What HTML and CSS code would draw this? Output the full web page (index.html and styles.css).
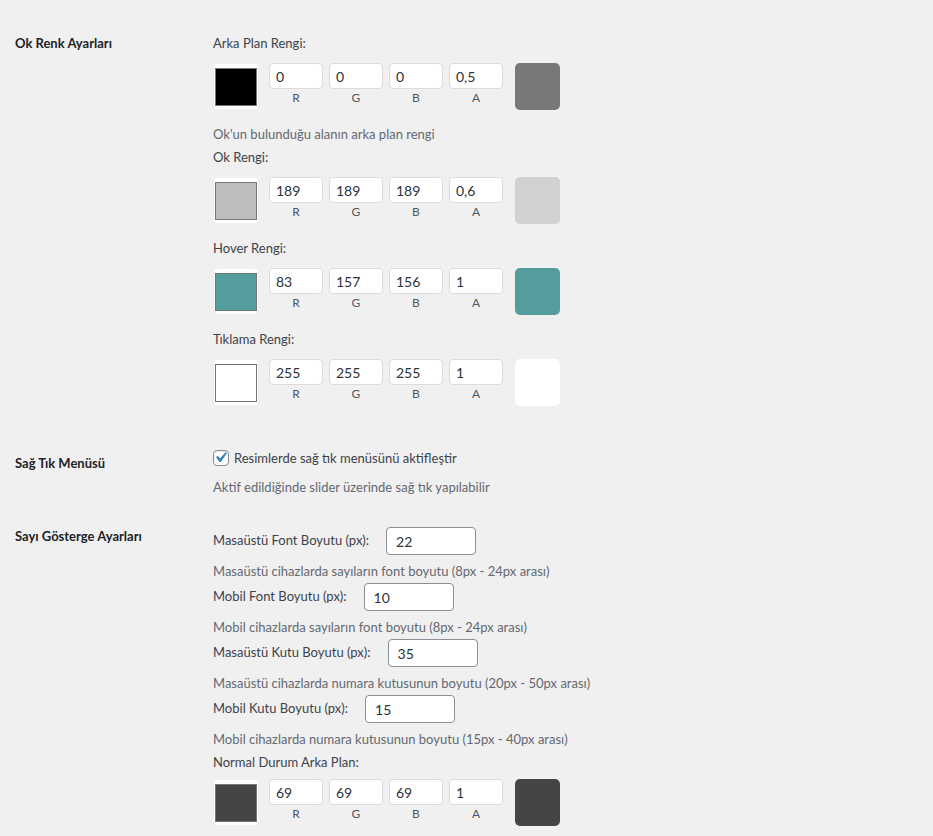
FILE: index.html
```html
<!DOCTYPE html>
<html lang="tr">
<head>
<meta charset="utf-8">
<title>Slider Ayarları</title>
<link rel="stylesheet" href="styles.css">
</head>
<body>
<main class="settings">

  <section class="field field--arrows">
    <div class="field-title">Ok Renk Ayarları</div>
    <div class="field-body">
      <div class="color-group color-group--described">
        <div class="group-label">Arka Plan Rengi:</div>
        <div class="rgba-row">
          <span class="swatch"><span class="swatch-fill" style="background:#000000"></span></span>
          <label class="channel"><input class="channel-input" type="text" value="0"><span class="channel-name">R</span></label>
          <label class="channel"><input class="channel-input" type="text" value="0"><span class="channel-name">G</span></label>
          <label class="channel"><input class="channel-input" type="text" value="0"><span class="channel-name">B</span></label>
          <label class="channel"><input class="channel-input" type="text" value="0,5"><span class="channel-name">A</span></label>
          <span class="preview" style="background:rgba(0,0,0,0.5)"></span>
        </div>
        <p class="description description--after-row">Ok'un bulunduğu alanın arka plan rengi</p>
      </div>

      <div class="color-group">
        <div class="group-label">Ok Rengi:</div>
        <div class="rgba-row">
          <span class="swatch"><span class="swatch-fill" style="background:#bdbdbd"></span></span>
          <label class="channel"><input class="channel-input" type="text" value="189"><span class="channel-name">R</span></label>
          <label class="channel"><input class="channel-input" type="text" value="189"><span class="channel-name">G</span></label>
          <label class="channel"><input class="channel-input" type="text" value="189"><span class="channel-name">B</span></label>
          <label class="channel"><input class="channel-input" type="text" value="0,6"><span class="channel-name">A</span></label>
          <span class="preview" style="background:rgba(189,189,189,0.6)"></span>
        </div>
      </div>

      <div class="color-group">
        <div class="group-label">Hover Rengi:</div>
        <div class="rgba-row">
          <span class="swatch"><span class="swatch-fill" style="background:#539d9c"></span></span>
          <label class="channel"><input class="channel-input" type="text" value="83"><span class="channel-name">R</span></label>
          <label class="channel"><input class="channel-input" type="text" value="157"><span class="channel-name">G</span></label>
          <label class="channel"><input class="channel-input" type="text" value="156"><span class="channel-name">B</span></label>
          <label class="channel"><input class="channel-input" type="text" value="1"><span class="channel-name">A</span></label>
          <span class="preview" style="background:rgba(83,157,156,1)"></span>
        </div>
      </div>

      <div class="color-group">
        <div class="group-label">Tıklama Rengi:</div>
        <div class="rgba-row">
          <span class="swatch"><span class="swatch-fill" style="background:#ffffff"></span></span>
          <label class="channel"><input class="channel-input" type="text" value="255"><span class="channel-name">R</span></label>
          <label class="channel"><input class="channel-input" type="text" value="255"><span class="channel-name">G</span></label>
          <label class="channel"><input class="channel-input" type="text" value="255"><span class="channel-name">B</span></label>
          <label class="channel"><input class="channel-input" type="text" value="1"><span class="channel-name">A</span></label>
          <span class="preview" style="background:rgba(255,255,255,1)"></span>
        </div>
      </div>
    </div>
  </section>

  <section class="field field--context">
    <div class="field-title">Sağ Tık Menüsü</div>
    <div class="field-body">
      <label class="check">
        <span class="check-box">
          <svg class="check-mark" viewBox="0 0 20 20" width="21" height="21" aria-hidden="true"><path d="M14.83 4.89l1.34.94-5.81 8.38H9.02L5.78 9.67l1.34-1.25 2.57 2.4z"/></svg>
        </span>
        <span>Resimlerde sağ tık menüsünü aktifleştir</span>
      </label>
      <p class="description description--check">Aktif edildiğinde slider üzerinde sağ tık yapılabilir</p>
    </div>
  </section>

  <section class="field field--counter">
    <div class="field-title">Sayı Gösterge Ayarları</div>
    <div class="field-body">
      <div class="size-line"><span class="size-label">Masaüstü Font Boyutu (px):</span><input class="size-input" type="text" value="22"></div>
      <p class="description description--size">Masaüstü cihazlarda sayıların font boyutu (8px - 24px arası)</p>

      <div class="size-line"><span class="size-label">Mobil Font Boyutu (px):</span><input class="size-input" type="text" value="10"></div>
      <p class="description description--size">Mobil cihazlarda sayıların font boyutu (8px - 24px arası)</p>

      <div class="size-line"><span class="size-label">Masaüstü Kutu Boyutu (px):</span><input class="size-input" type="text" value="35"></div>
      <p class="description description--size">Masaüstü cihazlarda numara kutusunun boyutu (20px - 50px arası)</p>

      <div class="size-line"><span class="size-label">Mobil Kutu Boyutu (px):</span><input class="size-input" type="text" value="15"></div>
      <p class="description description--size">Mobil cihazlarda numara kutusunun boyutu (15px - 40px arası)</p>

      <div class="color-group color-group--counter">
        <div class="group-label">Normal Durum Arka Plan:</div>
        <div class="rgba-row">
          <span class="swatch"><span class="swatch-fill" style="background:#454545"></span></span>
          <label class="channel"><input class="channel-input" type="text" value="69"><span class="channel-name">R</span></label>
          <label class="channel"><input class="channel-input" type="text" value="69"><span class="channel-name">G</span></label>
          <label class="channel"><input class="channel-input" type="text" value="69"><span class="channel-name">B</span></label>
          <label class="channel"><input class="channel-input" type="text" value="1"><span class="channel-name">A</span></label>
          <span class="preview" style="background:rgba(69,69,69,1)"></span>
        </div>
      </div>
    </div>
  </section>

</main>
</body>
</html>
```

FILE: styles.css
```css
html,
body {
  margin: 0;
  padding: 0;
  background: #f0f0f1;
}

body {
  font-family: Lato, "Open Sans", "Liberation Sans", sans-serif;
  font-size: 13px;
  line-height: 20px;
  color: #3c434a;
  overflow: hidden;
}

.settings {
  padding: 13px 0 0 15px;
}

/* each settings field: title column + controls column */
.field {
  display: grid;
  grid-template-columns: 198px 1fr;
}

.field-title {
  padding-top: 20px;
  font-weight: 700;
  color: #1d2327;
}

.field--arrows .field-body {
  padding: 20px 0 27px;
}

.field--context .field-body {
  padding: 15px 0 9px;
}

.field--counter .field-body {
  padding: 21px 0 20px;
}

/* colour picker groups */
.color-group {
  margin-bottom: 14px;
}

.color-group--described {
  margin-bottom: 3px;
}

.color-group:last-child {
  margin-bottom: 0;
}

.group-label {
  height: 20px;
}

.rgba-row {
  display: flex;
  align-items: flex-start;
  margin-top: 10px;
  height: 47px;
}

.swatch {
  box-sizing: border-box;
  width: 44px;
  height: 45px;
  margin: 1px 0 0 1px;
  padding: 4px 1px 3px;
  background: #fff;
  border-radius: 4px;
}

.swatch-fill {
  display: block;
  box-sizing: border-box;
  width: 42px;
  height: 38px;
  border: 1px solid #767676;
}

.channel {
  display: flex;
  flex-direction: column;
  align-items: center;
  width: 54px;
  margin-left: 6px;
}

.swatch + .channel {
  margin-left: 11px;
}

.channel-input {
  box-sizing: border-box;
  width: 54px;
  height: 26px;
  margin: 0;
  padding: 0 6px;
  border: 1px solid #dcdcde;
  border-radius: 4px;
  background: #fff;
  font: 14px Lato, "Open Sans", sans-serif;
  color: #2c3338;
  outline: none;
}

.channel-name {
  font-size: 12px;
  line-height: 18px;
  color: #50575e;
}

.preview {
  width: 45px;
  height: 47px;
  margin-left: 12px;
  border-radius: 5px;
}

.description {
  margin: 0;
  color: #646970;
}

.description--after-row {
  margin-top: 14px;
}

.description--check {
  margin-top: 9px;
}

.description--size {
  margin: 6px 0 2px;
}

/* checkbox */
.check {
  display: flex;
  align-items: center;
  height: 20px;
}

.check-box {
  position: relative;
  box-sizing: border-box;
  width: 16px;
  height: 16px;
  margin-right: 5px;
  border: 1px solid #8c8f94;
  border-radius: 4px;
  background: #fff;
  box-shadow: inset 0 1px 2px rgba(0, 0, 0, 0.1);
}

.check-mark {
  position: absolute;
  left: -4px;
  top: -4px;
  fill: #3582c4;
}

/* number inputs */
.size-line {
  display: flex;
  align-items: center;
  height: 28px;
}

.size-label {
  padding-bottom: 3px;
  color: #3c434a;
}

.size-input {
  box-sizing: border-box;
  width: 90px;
  height: 28px;
  margin: 0 0 0 17px;
  padding: 0 9px;
  border: 1px solid #8c8f94;
  border-radius: 4px;
  background: #fff;
  font: 14px Lato, "Open Sans", sans-serif;
  color: #2c3338;
  outline: none;
}

.color-group--counter {
  margin-top: 3px;
}

.color-group--counter .rgba-row {
  margin-top: 7px;
}
```
